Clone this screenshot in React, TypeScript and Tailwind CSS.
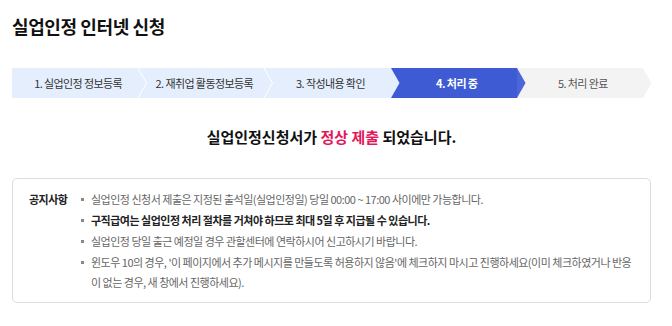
import React from 'react';

const steps = [
  { label: '1. 실업인정 정보등록', box: 'bg-[#e4eefd] text-[#333]', tip: '#e4eefd', line: true },
  { label: '2. 재취업 활동정보등록', box: 'bg-[#e4eefd] text-[#333]', tip: '#e4eefd', line: true },
  { label: '3. 작성내용 확인', box: 'bg-[#e4eefd] text-[#333]', tip: '#e4eefd', line: false },
  { label: '4. 처리 중', box: 'bg-[#3e5bd3] text-white font-bold', tip: '#4a66d9', line: false },
  { label: '5. 처리 완료', box: 'bg-[#f3f3f3] text-[#555]', tip: '#f3f3f3', line: false },
];

const notices = [
  { text: '실업인정 신청서 제출은 지정된 출석일(실업인정일) 당일 00:00 ~ 17:00 사이에만 가능합니다.', bold: false },
  { text: '구직급여는 실업인정 처리 절차를 거쳐야 하므로 최대 5일 후 지급될 수 있습니다.', bold: true },
  { text: '실업인정 당일 출근 예정일 경우 관할센터에 연락하시어 신고하시기 바랍니다.', bold: false },
];

function StepTip({ color, line }: { color: string; line: boolean }) {
  return (
    <svg className="absolute left-full top-0 z-10 h-[30px] w-[9px]" viewBox="0 0 9 30">
      <polygon points="0,0 8.5,15 0,30" fill={color} />
      {line && <polyline points="0,0 8.5,15 0,30" fill="none" stroke="#ffffff" strokeWidth="1" />}
    </svg>
  );
}

export default function App() {
  return (
    <div className="min-h-[326px] bg-white px-3 font-['Noto_Sans_CJK_KR','Noto_Sans',sans-serif]">
      {/* Title */}
      <h1 className="pt-[13px] text-[18px] font-bold leading-[26px] tracking-[-0.4px] text-[#111]">실업인정 인터넷 신청</h1>

      {/* Stepper */}
      <div className="mt-[29px] flex w-[631px]">
        {steps.map((s) => (
          <div key={s.label} className={`relative flex h-[30px] flex-1 items-center justify-center text-[11px] tracking-[-0.6px] ${s.box}`}>
            <span className="pl-[6px]">{s.label}</span>
            <StepTip color={s.tip} line={s.line} />
          </div>
        ))}
      </div>

      {/* Result */}
      <p className="mt-[28px] w-[639px] text-center text-[15px] font-bold leading-[22px] text-[#111]">
        실업인정신청서가 <span className="text-[#e1195c]">정상 제출</span> 되었습니다.
      </p>

      {/* Notice */}
      <div className="mt-[30px] flex w-[639px] rounded-[5px] border border-[#dcdcdc] pb-[10px] pl-[16px] pr-[10px] pt-[10px] text-[11px] leading-[20px] tracking-[-0.5px]">
        <div className="w-[52px] shrink-0 font-bold text-[#222]">공지사항</div>
        <ul className="flex flex-col gap-[1px]">
          {notices.map((n) => (
            <li key={n.text} className="flex">
              <span className="mr-[7px] mt-[9px] h-[3px] w-[3px] shrink-0 bg-[#888]" />
              <span className={n.bold ? 'font-bold text-[#222]' : 'text-[#666]'}>{n.text}</span>
            </li>
          ))}
          <li className="flex">
            <span className="mr-[7px] mt-[9px] h-[3px] w-[3px] shrink-0 bg-[#888]" />
            <span className="text-[#666]">
              윈도우 10의 경우, '이 페이지에서 추가 메시지를 만들도록 허용하지 않음'에 체크하지 마시고 진행하세요(이미 체크하였거나 반응
              <br />
              이 없는 경우, 새 창에서 진행하세요).
            </span>
          </li>
        </ul>
      </div>
    </div>
  );
}
